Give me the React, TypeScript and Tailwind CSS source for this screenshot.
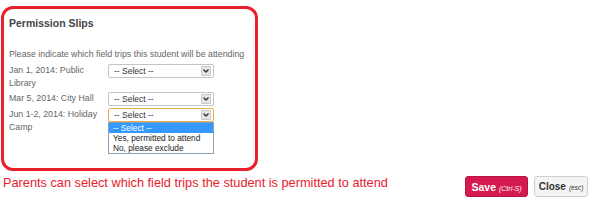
import React from 'react';

const TRIPS = [
  { label: 'Jan 1, 2014: Public Library', open: false },
  { label: 'Mar 5, 2014: City Hall', open: false },
  { label: 'Jun 1-2, 2014: Holiday Camp', open: true },
];

const OPTIONS = ['-- Select --', 'Yes, permitted to attend', 'No, please exclude'];

const Arrow = () => (
  <span className="flex items-center justify-center w-[10px] h-[10px] bg-[#e6e6e6] border border-[#c8c8c8] rounded-[1px]">
    <svg width="6" height="4" viewBox="0 0 6 4">
      <path d="M0.5 0.5 L3 3 L5.5 0.5" fill="none" stroke="#333" strokeWidth="1.4" />
    </svg>
  </span>
);

const FakeSelect: React.FC<{ open: boolean }> = ({ open }) => (
  <div className="relative w-[106px]">
    <div
      className={`h-[14px] flex items-center justify-between pl-[5px] pr-[2px] bg-white rounded-[2px] border ${
        open ? 'border-[#e8b04c]' : 'border-[#c4c4c4]'
      }`}
    >
      <span className="text-[8.5px] leading-none text-[#333]">-- Select --</span>
      <Arrow />
    </div>
    {open && (
      <div className="absolute left-0 top-[14px] w-[106px] bg-white border border-[#8aa0b8] flex flex-col">
        {OPTIONS.map((o, i) => (
          <div
            key={o}
            className={`h-[10px] flex items-center pl-[4px] text-[8.3px] leading-none ${
              i === 0 ? 'bg-[#3399ff] text-white' : 'text-[#222]'
            }`}
          >
            {o}
          </div>
        ))}
      </div>
    )}
  </div>
);

export default function App() {
  return (
    <div className="w-[600px] h-[206px] bg-white font-['Liberation_Sans',Arial,sans-serif]">
      <div className="pt-[6px] pl-[1px]">
        <div className="w-[257px] h-[165px] border-[3px] border-[#e8202c] rounded-[12px] pl-[5px] pt-[9px]">
          <h2 className="text-[10.5px] font-bold text-[#444] leading-none">Permission Slips</h2>
          <p className="mt-[21px] text-[8.8px] text-[#666] leading-none">
            Please indicate which field trips this student will be attending
          </p>
          <div className="mt-[6px] flex flex-col gap-[2px]">
            {TRIPS.map((t) => (
              <div key={t.label} className="flex items-start">
                <span className="w-[99px] text-[8.8px] leading-[13px] text-[#666]">{t.label}</span>
                <FakeSelect open={t.open} />
              </div>
            ))}
          </div>
        </div>
      </div>
      <div className="flex items-start justify-between pl-[3px] pr-[12px] mt-[5px]">
        <span className="text-[12.75px] text-[#e8202c] leading-none pt-[1px]">
          Parents can select which field trips the student is permitted to attend
        </span>
        <div className="flex gap-[6px]">
          <button className="w-[63px] h-[21px] bg-[#d51a4f] border border-[#b8123f] rounded-[3px] text-white flex items-baseline justify-center gap-[3px] pt-[5px]">
            <span className="text-[10.5px] font-bold leading-none">Save</span>
            <span className="text-[7px] italic leading-none">(Ctrl-S)</span>
          </button>
          <button className="w-[54px] h-[21px] bg-[#f4f4f4] border border-[#cfcfcf] rounded-[3px] text-[#333] flex items-baseline justify-center gap-[3px] pt-[5px]">
            <span className="text-[10px] font-bold leading-none">Close</span>
            <span className="text-[6.5px] italic leading-none">(esc)</span>
          </button>
        </div>
      </div>
    </div>
  );
}
